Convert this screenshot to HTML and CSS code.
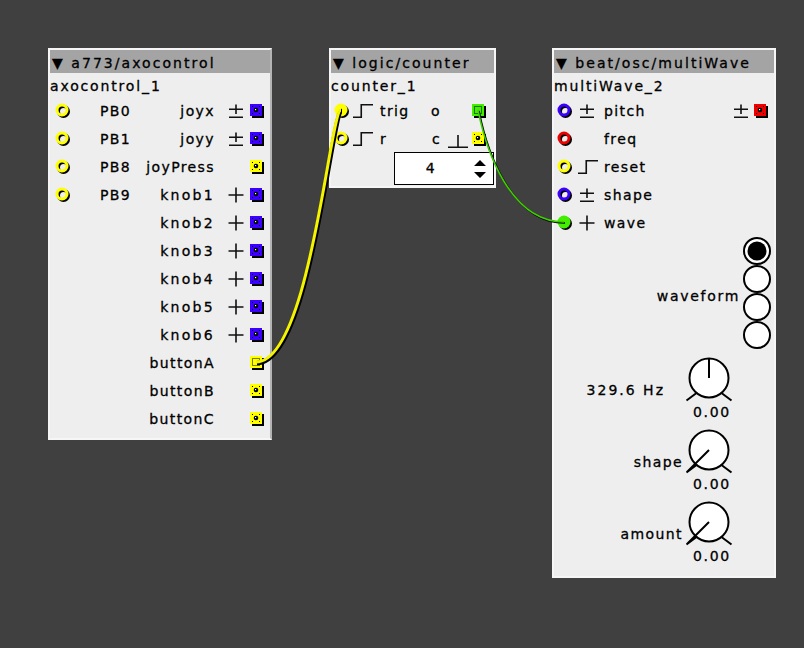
FILE: index.html
```html
<!DOCTYPE html>
<html>
<head>
<meta charset="utf-8">
<link rel="stylesheet" href="styles.css">
</head>
<body>
<svg class="defs" xmlns="http://www.w3.org/2000/svg">
  <symbol id="inlet" viewBox="0 0 16 16">
    <circle cx="8.5" cy="8.5" r="5" fill="none" stroke="#000" stroke-width="3"/>
    <circle cx="7" cy="7" r="5" fill="none" stroke="currentColor" stroke-width="3"/>
  </symbol>
  <symbol id="inlet-on" viewBox="0 0 16 16">
    <circle cx="8.5" cy="8.5" r="6.5" fill="#000"/>
    <circle cx="7" cy="7" r="6.5" fill="currentColor"/>
  </symbol>
  <symbol id="outlet" viewBox="0 0 16 16">
    <rect x="3" y="3" width="12" height="12" fill="#000"/>
    <rect x="1" y="1" width="12" height="12" fill="currentColor"/>
    <circle cx="7" cy="7" r="2.3" fill="#000"/>
    <rect x="6" y="6" width="1.2" height="1.2" fill="#fff"/>
    <rect x="3" y="3" width="1" height="1" fill="#000"/>
    <rect x="10" y="3" width="1" height="1" fill="#000"/>
    <rect x="3" y="10" width="1" height="1" fill="#000"/>
    <rect x="10" y="10" width="1" height="1" fill="#000"/>
  </symbol>
  <symbol id="outlet-on" viewBox="0 0 16 16">
    <rect x="3" y="3" width="12" height="12" fill="#000"/>
    <rect x="1" y="1" width="12" height="12" fill="currentColor"/>
    <rect x="3.5" y="3.5" width="7" height="7" fill="none" stroke="#000" stroke-width="1" stroke-dasharray="1 1"/>
  </symbol>
  <symbol id="pm" viewBox="0 0 16 16">
    <path d="M8 1.5V11M1 6.25H15M1 14.25H15" stroke="#111" stroke-width="1.6" fill="none"/>
  </symbol>
  <symbol id="plus" viewBox="0 0 16 16">
    <path d="M8 0.5V15.5M0.5 8H15.5" stroke="#111" stroke-width="1.6" fill="none"/>
  </symbol>
  <symbol id="step" viewBox="0 0 20 16">
    <path d="M0 14.25H8.25V1.75H20" stroke="#111" stroke-width="1.6" fill="none"/>
  </symbol>
  <symbol id="pulse" viewBox="0 0 20 20">
    <path d="M0 18.25H20M10 6V18.25" stroke="#111" stroke-width="1.6" fill="none"/>
  </symbol>
</svg>

<div class="canvas">

  <div class="obj obj-axo">
    <div class="hdr">▼ a773/axocontrol</div>
    <div class="inst">axocontrol_1</div>
    <div class="row">
      <svg class="jack ml5 y"><use href="#inlet"/></svg><span class="lbl ml29">PB0</span>
      <span class="fill"></span><span class="lbl">joyx</span>
      <svg class="sym ml13"><use href="#pm"/></svg><svg class="jack ml5 mr5 b"><use href="#outlet"/></svg>
    </div>
    <div class="row">
      <svg class="jack ml5 y"><use href="#inlet"/></svg><span class="lbl ml29">PB1</span>
      <span class="fill"></span><span class="lbl">joyy</span>
      <svg class="sym ml13"><use href="#pm"/></svg><svg class="jack ml5 mr5 b"><use href="#outlet"/></svg>
    </div>
    <div class="row">
      <svg class="jack ml5 y"><use href="#inlet"/></svg><span class="lbl ml29">PB8</span>
      <span class="fill"></span><span class="lbl">joyPress</span>
      <span class="sym ml13"></span><svg class="jack ml5 mr5 y"><use href="#outlet"/></svg>
    </div>
    <div class="row">
      <svg class="jack ml5 y"><use href="#inlet"/></svg><span class="lbl ml29">PB9</span>
      <span class="fill"></span><span class="lbl wide">knob1</span>
      <svg class="sym ml13"><use href="#plus"/></svg><svg class="jack ml5 mr5 b"><use href="#outlet"/></svg>
    </div>
    <div class="row">
      <span class="fill"></span><span class="lbl wide">knob2</span>
      <svg class="sym ml13"><use href="#plus"/></svg><svg class="jack ml5 mr5 b"><use href="#outlet"/></svg>
    </div>
    <div class="row">
      <span class="fill"></span><span class="lbl wide">knob3</span>
      <svg class="sym ml13"><use href="#plus"/></svg><svg class="jack ml5 mr5 b"><use href="#outlet"/></svg>
    </div>
    <div class="row">
      <span class="fill"></span><span class="lbl wide">knob4</span>
      <svg class="sym ml13"><use href="#plus"/></svg><svg class="jack ml5 mr5 b"><use href="#outlet"/></svg>
    </div>
    <div class="row">
      <span class="fill"></span><span class="lbl wide">knob5</span>
      <svg class="sym ml13"><use href="#plus"/></svg><svg class="jack ml5 mr5 b"><use href="#outlet"/></svg>
    </div>
    <div class="row">
      <span class="fill"></span><span class="lbl wide">knob6</span>
      <svg class="sym ml13"><use href="#plus"/></svg><svg class="jack ml5 mr5 b"><use href="#outlet"/></svg>
    </div>
    <div class="row">
      <span class="fill"></span><span class="lbl">buttonA</span>
      <span class="sym ml13"></span><svg class="jack ml5 mr5 y"><use href="#outlet-on"/></svg>
    </div>
    <div class="row">
      <span class="fill"></span><span class="lbl">buttonB</span>
      <span class="sym ml13"></span><svg class="jack ml5 mr5 y"><use href="#outlet"/></svg>
    </div>
    <div class="row">
      <span class="fill"></span><span class="lbl">buttonC</span>
      <span class="sym ml13"></span><svg class="jack ml5 mr5 y"><use href="#outlet"/></svg>
    </div>
  </div>

  <div class="obj obj-cnt">
    <div class="hdr">▼ logic/counter</div>
    <div class="inst">counter_1</div>
    <div class="row">
      <svg class="jack ml3 y"><use href="#inlet-on"/></svg>
      <svg class="step ml3"><use href="#step"/></svg>
      <span class="lbl ml7">trig</span>
      <span class="fill"></span><span class="lbl">o</span>
      <span class="sym20 ml7"></span><svg class="jack ml3 mr7 g"><use href="#outlet-on"/></svg>
    </div>
    <div class="row">
      <svg class="jack ml3 y"><use href="#inlet"/></svg>
      <svg class="step ml3"><use href="#step"/></svg>
      <span class="lbl ml7">r</span>
      <span class="fill"></span><span class="lbl">c</span>
      <svg class="sym20 ml7"><use href="#pulse"/></svg><svg class="jack ml3 mr7 y"><use href="#outlet"/></svg>
    </div>
    <div class="numrow">
      <div class="numbox">
        <span class="numval">4</span>
        <svg class="spin" viewBox="0 0 14 20"><path d="M1 7L7 1L13 7Z M1 13L7 19L13 13Z" fill="#000"/></svg>
      </div>
    </div>
  </div>

  <div class="obj obj-mw">
    <div class="hdr">▼ beat/osc/multiWave</div>
    <div class="inst">multiWave_2</div>
    <div class="row">
      <svg class="jack ml3 b"><use href="#inlet"/></svg>
      <svg class="sym ml6"><use href="#pm"/></svg>
      <span class="lbl ml9">pitch</span>
      <span class="fill"></span>
      <svg class="sym"><use href="#pm"/></svg><svg class="jack ml4 mr5 r"><use href="#outlet"/></svg>
    </div>
    <div class="row">
      <svg class="jack ml3 r"><use href="#inlet"/></svg>
      <span class="lbl ml31">freq</span>
    </div>
    <div class="row">
      <svg class="jack ml3 y"><use href="#inlet"/></svg>
      <svg class="step ml5"><use href="#step"/></svg>
      <span class="lbl ml6">reset</span>
    </div>
    <div class="row">
      <svg class="jack ml3 b"><use href="#inlet"/></svg>
      <svg class="sym ml6"><use href="#pm"/></svg>
      <span class="lbl ml9">shape</span>
    </div>
    <div class="row">
      <svg class="jack ml3 g"><use href="#inlet-on"/></svg>
      <svg class="sym ml6"><use href="#plus"/></svg>
      <span class="lbl ml9">wave</span>
    </div>
    <div class="radio-sec">
      <span class="lbl radio-lbl">waveform</span>
      <svg class="radios" viewBox="0 0 30 112">
        <circle cx="15" cy="14" r="13" fill="#fff" stroke="#000" stroke-width="2"/>
        <circle cx="15" cy="14" r="9.5" fill="#000"/>
        <circle cx="15" cy="42" r="13" fill="#fff" stroke="#000" stroke-width="2"/>
        <circle cx="15" cy="70" r="13" fill="#fff" stroke="#000" stroke-width="2"/>
        <circle cx="15" cy="98" r="13" fill="#fff" stroke="#000" stroke-width="2"/>
      </svg>
    </div>
    <div class="knob-sec">
      <span class="lbl knob-lbl hz">329.6 Hz</span>
      <div class="knob-col">
        <svg class="knob" viewBox="0 0 48 48">
          <circle cx="24" cy="22" r="19.5" fill="#fff" stroke="#000" stroke-width="2"/>
          <path d="M12.2 36.5L1.5 44.5M35.8 36.5L46.5 44.5M24 22V2.5" stroke="#000" stroke-width="2" fill="none"/>
        </svg>
        <span class="kval">0.00</span>
      </div>
    </div>
    <div class="knob-sec">
      <span class="lbl knob-lbl">shape</span>
      <div class="knob-col">
        <svg class="knob" viewBox="0 0 48 48">
          <circle cx="24" cy="22" r="19.5" fill="#fff" stroke="#000" stroke-width="2"/>
          <path d="M12.2 36.5L1.5 44.5M35.8 36.5L46.5 44.5M24 22L2 44" stroke="#000" stroke-width="2" fill="none"/>
        </svg>
        <span class="kval">0.00</span>
      </div>
    </div>
    <div class="knob-sec">
      <span class="lbl knob-lbl">amount</span>
      <div class="knob-col">
        <svg class="knob" viewBox="0 0 48 48">
          <circle cx="24" cy="22" r="19.5" fill="#fff" stroke="#000" stroke-width="2"/>
          <path d="M12.2 36.5L1.5 44.5M35.8 36.5L46.5 44.5M24 22L2 44" stroke="#000" stroke-width="2" fill="none"/>
        </svg>
        <span class="kval">0.00</span>
      </div>
    </div>
  </div>

  <svg class="wires" viewBox="0 0 804 648">
    <path d="M257 363C311 363 331 111 342 111" stroke="#000" stroke-width="4.5" fill="none"/>
    <path d="M256 362C310 362 330 110 341 110" stroke="#f4f400" stroke-width="3" fill="none"/>
    <path d="M479 111C487 151 511 223 565 223" stroke="#000" stroke-width="1.6" fill="none"/>
    <path d="M478 110C486 150 510 222 564 222" stroke="#3ed000" stroke-width="1.5" fill="none"/>
  </svg>
</div>
</body>
</html>
```

FILE: styles.css
```css
* { box-sizing: border-box; }
html, body { margin: 0; padding: 0; }
body {
  width: 804px;
  height: 648px;
  overflow: hidden;
  background: #404040;
  font-family: "DejaVu Sans", "Liberation Sans", sans-serif;
  font-size: 14px;
  letter-spacing: 1.4px;
  color: #000;
  -webkit-text-stroke: 0.3px #000;
}
.defs { position: absolute; width: 0; height: 0; overflow: hidden; }
.canvas { position: relative; width: 804px; height: 648px; }

.obj {
  position: absolute;
  background: #eeeeee;
  border: 2px solid #f6f6f6;
  display: flex;
  flex-direction: column;
}
.obj-axo { left: 48px; top: 48px; width: 224px; height: 392px; border-right-color: #b4b4b4; }
.obj-cnt { left: 329px; top: 48px; width: 167px; height: 140px; }
.obj-mw  { left: 552px; top: 48px; width: 224px; height: 530px; }

.hdr {
  height: 23px;
  flex: none;
  background: #a4a4a4;
  padding: 4px 0 0 2px;
  line-height: 19px;
  letter-spacing: 2.05px;
  white-space: nowrap;
}
.inst {
  height: 24px;
  flex: none;
  padding-top: 3px;
  line-height: 21px;
  letter-spacing: 1.85px;
  white-space: nowrap;
}

.row {
  height: 28px;
  flex: none;
  display: flex;
  align-items: center;
  line-height: 28px;
  white-space: nowrap;
}
.fill { flex: 1; }
.lbl { flex: none; }
.wide { letter-spacing: 2.3px; }

.jack { width: 16px; height: 16px; flex: none; display: block; }
.sym { width: 16px; height: 16px; flex: none; display: block; }
.sym20 { width: 20px; height: 20px; flex: none; display: block; }
.step { width: 20px; height: 16px; flex: none; display: block; }

.y { color: #ffff00; }
.b { color: #3c00ff; }
.r { color: #ee0000; }
.g { color: #44ee00; }

.ml3 { margin-left: 3px; }
.ml4 { margin-left: 4px; }
.ml5 { margin-left: 5px; }
.ml6 { margin-left: 6px; }
.ml7 { margin-left: 7px; }
.ml9 { margin-left: 9px; }
.ml13 { margin-left: 13px; }
.ml29 { margin-left: 29px; }
.ml31 { margin-left: 31px; }
.mr5 { margin-right: 5px; }
.mr7 { margin-right: 7px; }

.numrow { display: flex; justify-content: flex-end; margin-top: -1px; }
.numbox {
  width: 100px;
  height: 33px;
  background: #fff;
  border: 1px solid #000;
  display: flex;
  align-items: center;
}
.numval { width: 72px; text-align: center; line-height: 31px; }
.spin { width: 14px; height: 20px; display: block; margin-left: 6px; }

.radio-sec {
  display: flex;
  justify-content: flex-end;
  align-items: center;
  padding-right: 2px;
  height: 112px;
  flex: none;
}
.radio-lbl { margin-right: 2px; line-height: 16px; margin-top: 6px; letter-spacing: 1.7px; }
.radios { width: 30px; height: 112px; display: block; }

.knob-sec {
  display: flex;
  justify-content: flex-end;
  align-items: flex-start;
  padding-right: 41px;
  height: 72px;
  flex: none;
}
.radio-sec + .knob-sec { margin-top: 7px; }
.knob-lbl { line-height: 16px; margin-top: 26px; margin-right: 2px; }
.hz { margin-right: 20px; letter-spacing: 2px; }
.knob-col { width: 48px; display: flex; flex-direction: column; align-items: center; }
.knob { width: 48px; height: 48px; display: block; }
.kval { line-height: 16px; margin-left: 6px; white-space: nowrap; letter-spacing: 1.7px; }

.wires {
  position: absolute;
  left: 0;
  top: 0;
  width: 804px;
  height: 648px;
  pointer-events: none;
}
```
